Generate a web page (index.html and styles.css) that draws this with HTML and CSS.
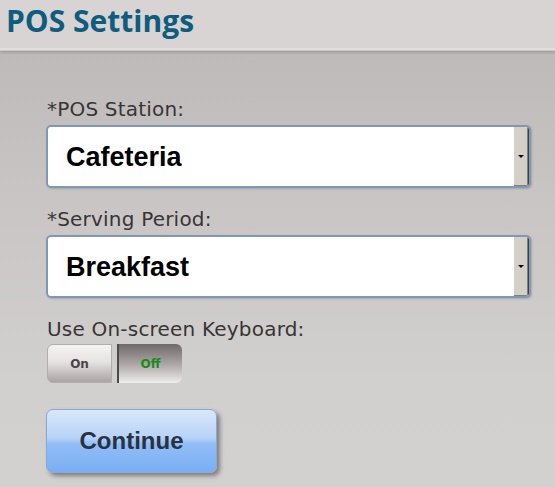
FILE: index.html
```html
<!DOCTYPE html>
<html>
<head>
<meta charset="utf-8">
<link rel="stylesheet" href="styles.css">
</head>
<body>
<header class="header">
  <h1 class="title">POS Settings</h1>
</header>
<main class="content">
  <div class="field">
    <label class="label">*POS Station:</label>
    <div class="select">
      <span class="select-value">Cafeteria</span>
      <span class="select-btn"><span class="arrow"></span></span>
    </div>
  </div>
  <div class="field">
    <label class="label">*Serving Period:</label>
    <div class="select">
      <span class="select-value">Breakfast</span>
      <span class="select-btn"><span class="arrow"></span></span>
    </div>
  </div>
  <div class="field">
    <label class="label">Use On-screen Keyboard:</label>
    <div class="toggle">
      <span class="toggle-on">On</span>
      <span class="toggle-off">Off</span>
    </div>
  </div>
  <button class="continue">Continue</button>
</main>
</body>
</html>
```
FILE: styles.css
```css
html, body {
  margin: 0;
  padding: 0;
}
body {
  width: 555px;
  height: 487px;
  overflow: hidden;
  background: linear-gradient(#bab6b5 0px, #c9c5c5 200px, #d2cfcf 380px, #d3d0d0 487px);
  font-family: "DejaVu Sans", Verdana, sans-serif;
}
.header {
  box-sizing: border-box;
  height: 50px;
  background: #d8d4d4;
  border-bottom: 2px solid #e3dfdf;
  box-shadow: 0 1px 0 #cbc7c7, 0 3px 2px rgba(120, 115, 114, 0.35);
  padding-left: 6px;
  display: flex;
  align-items: flex-start;
}
.title {
  margin: 0;
  font-family: "Open Sans", sans-serif;
  font-weight: 700;
  font-size: 30px;
  line-height: 41px;
  color: #0e5d7e;
}
.content {
  padding: 47px 24px 0 46px;
  display: flex;
  flex-direction: column;
}
.field {
  display: flex;
  flex-direction: column;
}
.label {
  font-size: 20px;
  line-height: 24px;
  color: #383535;
  padding-left: 1px;
  margin-bottom: 4px;
  letter-spacing: 0.2px;
}
.select {
  box-sizing: border-box;
  height: 63px;
  width: 485px;
  border: 2px solid #7f98b8;
  border-radius: 5px;
  background: #ffffff;
  display: flex;
  align-items: center;
  margin-bottom: 19px;
  overflow: hidden;
  box-shadow: 1px 1px 2px rgba(90, 90, 90, 0.3);
}
.select-value {
  flex: 1;
  padding-left: 18px;
  padding-top: 1px;
  font-family: "Liberation Sans", Arial, sans-serif;
  font-weight: 700;
  font-size: 27px;
  color: #000000;
}
.select-btn {
  width: 14px;
  align-self: stretch;
  background: #d4d0c8;
  border-left: 1px solid #ffffff;
  border-right: 1px solid #404040;
  box-shadow: inset -1px -1px 0 #808080;
  display: flex;
  align-items: center;
  justify-content: center;
}
.arrow {
  width: 0;
  height: 0;
  border-left: 3px solid transparent;
  border-right: 3px solid transparent;
  border-top: 3px solid #000000;
}
.toggle {
  display: flex;
  margin-top: -1px;
  margin-bottom: 26px;
}
.toggle-on, .toggle-off {
  width: 65px;
  height: 39px;
  display: flex;
  align-items: center;
  justify-content: center;
  font-size: 12px;
  font-weight: 700;
  box-sizing: border-box;
}
.toggle-on {
  margin-left: 1px;
  border-radius: 6px 0 0 6px;
  background: linear-gradient(#f4f2f2 0%, #e6e3e3 45%, #aaa4a4 100%);
  color: #4a4444;
  border: 1px solid #b3adad;
}
.toggle-off {
  margin-left: 5px;
  border-radius: 0 6px 6px 0;
  background: linear-gradient(#6f6868 0%, #aaa4a4 50%, #efecec 100%);
  color: #1b8a1b;
  border-left: 2px solid #4f4a4a;
}
.continue {
  box-sizing: border-box;
  width: 171px;
  height: 64px;
  border: 1px solid #8aa8d0;
  border-radius: 7px;
  background: linear-gradient(#d8e7fb 0%, #b7d3f8 45%, #90bdf6 55%, #7aaff4 100%);
  box-shadow: 3px 3px 4px rgba(60, 60, 60, 0.55);
  font-family: "Liberation Sans", Arial, sans-serif;
  font-weight: 700;
  font-size: 24px;
  color: #283243;
  padding: 0;
}
```
